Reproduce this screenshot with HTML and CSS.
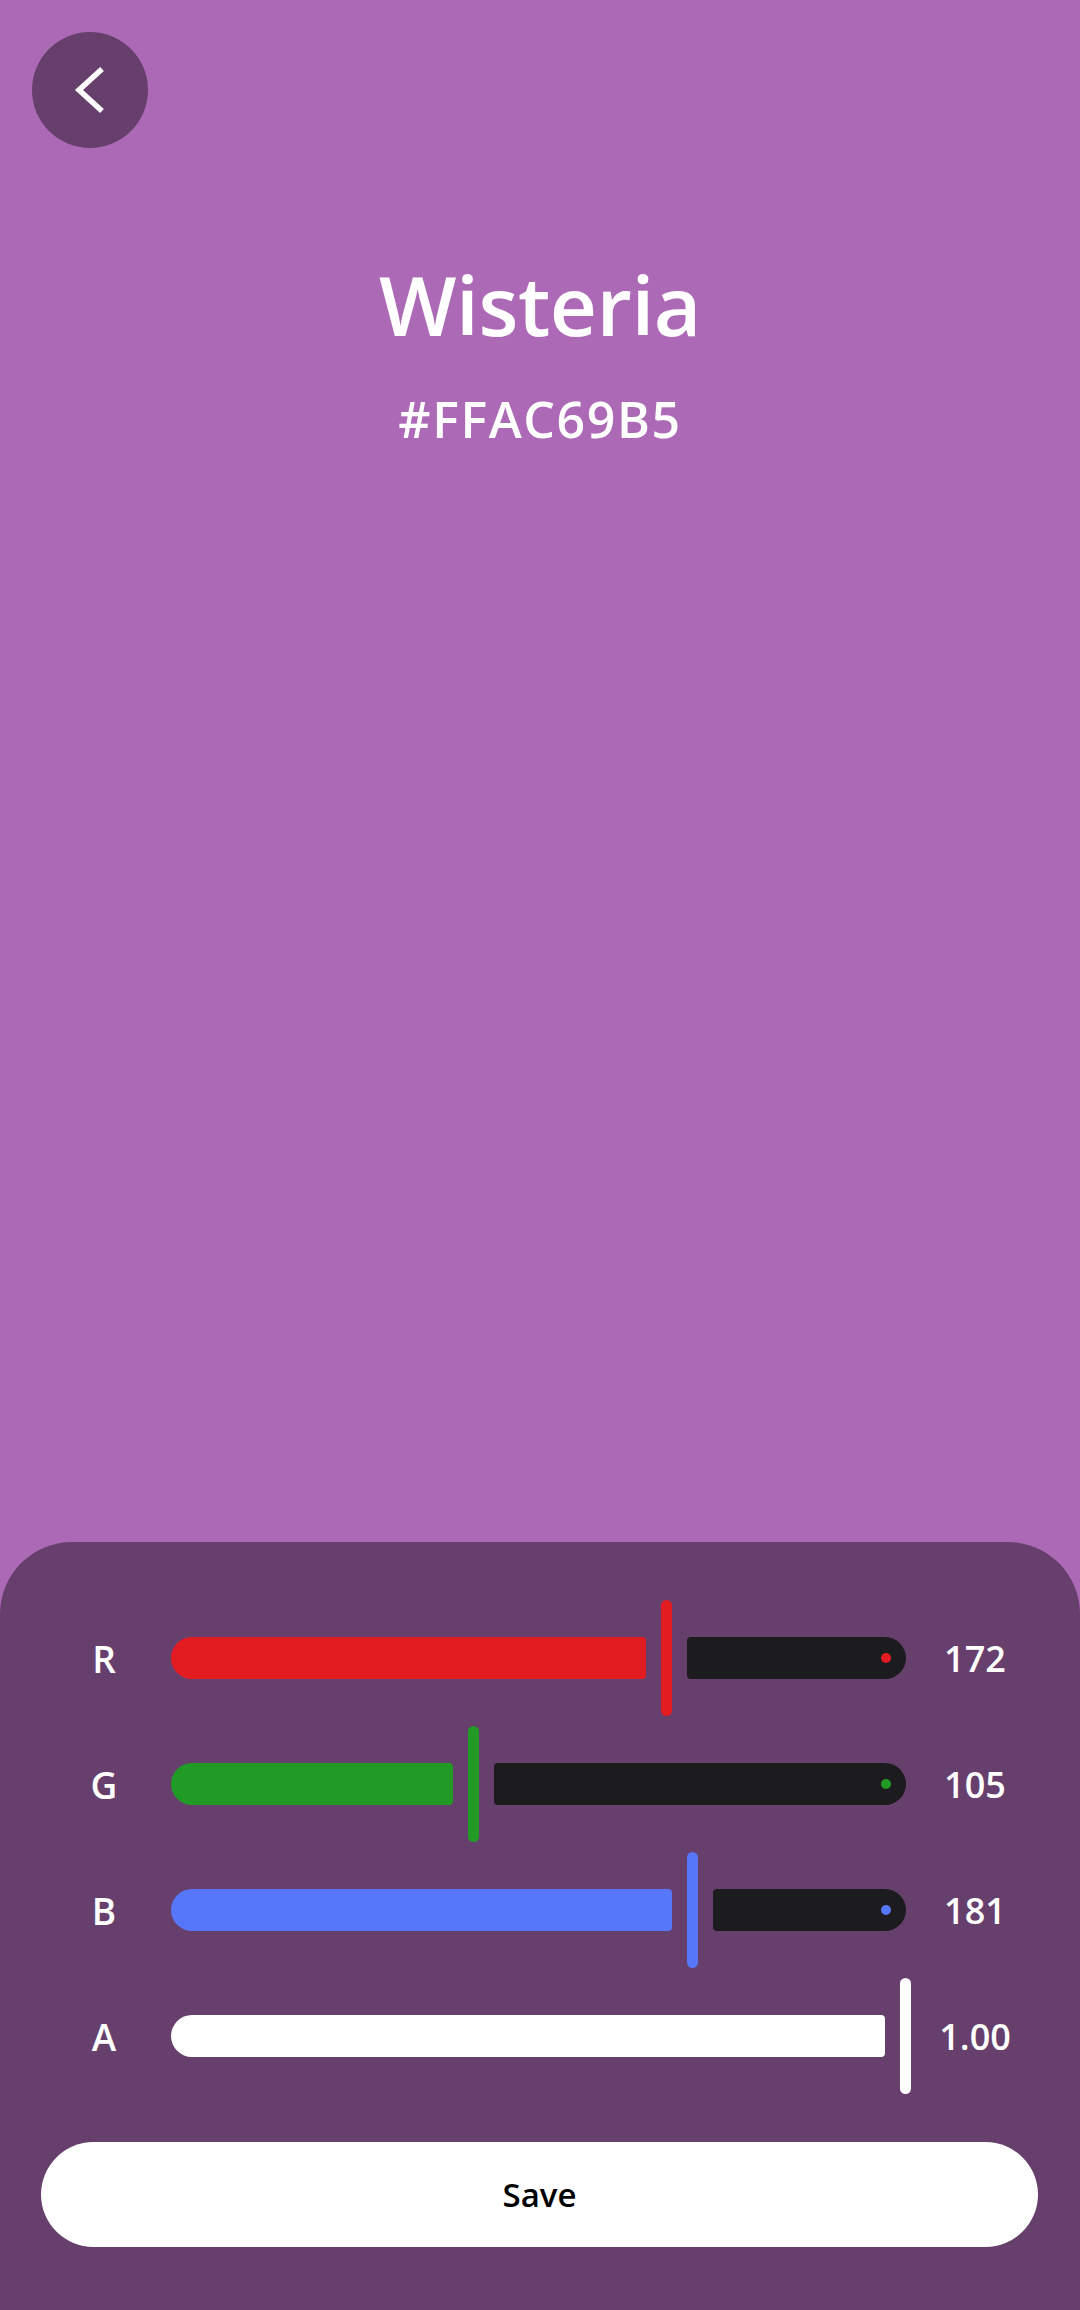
FILE: index.html
```html
<!DOCTYPE html>
<html lang="en">
<head>
    <meta charset="UTF-8">
    <meta name="viewport" content="width=device-width, initial-scale=1.0">
    <title>Wisteria</title>
    <link rel="stylesheet" href="styles.css">
</head>
<body>
    <div class="screen">
        <header class="top">
            <button class="back" aria-label="Back">
                <svg width="116" height="116" viewBox="0 0 116 116">
                    <polyline points="70,37 47,58 70,79" fill="none" stroke="#fff" stroke-width="5.5"/>
                </svg>
            </button>
            <h1 class="name">Wisteria</h1>
            <div class="hex">#FFAC69B5</div>
        </header>

        <section class="sheet">
            <div class="row">
                <span class="label">R</span>
                <div class="track red">
                    <div class="fill" style="width: 475px"></div>
                    <div class="thumb"></div>
                    <div class="rest"><span class="dot"></span></div>
                </div>
                <span class="value">172</span>
            </div>
            <div class="row">
                <span class="label">G</span>
                <div class="track green">
                    <div class="fill" style="width: 282px"></div>
                    <div class="thumb"></div>
                    <div class="rest"><span class="dot"></span></div>
                </div>
                <span class="value">105</span>
            </div>
            <div class="row">
                <span class="label">B</span>
                <div class="track blue">
                    <div class="fill" style="width: 501px"></div>
                    <div class="thumb"></div>
                    <div class="rest"><span class="dot"></span></div>
                </div>
                <span class="value">181</span>
            </div>
            <div class="row">
                <span class="label">A</span>
                <div class="track white">
                    <div class="fill" style="width: 714px"></div>
                    <div class="thumb"></div>
                </div>
                <span class="value">1.00</span>
            </div>

            <button class="save">Save</button>
        </section>
    </div>
</body>
</html>
```

FILE: styles.css
```css
/* Color detail screen */
* {
    box-sizing: border-box;
}

body {
    margin: 0;
    font-family: "Open Sans", "Noto Sans", sans-serif;
    background-color: #ac69b5;
    color: #fff;
}

.screen {
    display: flex;
    flex-direction: column;
    min-height: 100vh;
}

.top {
    display: flex;
    flex-direction: column;
    align-items: center;
    padding-top: 32px;
}

.back {
    align-self: flex-start;
    margin-left: 32px;
    width: 116px;
    height: 116px;
    padding: 0;
    border: none;
    border-radius: 50%;
    background-color: #673f6d;
    cursor: pointer;
}

.back svg {
    display: block;
}

.name {
    margin: 106px 0 0;
    font-size: 82px;
    line-height: 100px;
    font-weight: 600;
    letter-spacing: -0.5px;
}

.hex {
    margin-top: 35px;
    font-size: 50px;
    line-height: 60px;
    font-weight: 600;
    letter-spacing: 1.6px;
}

.sheet {
    margin-top: auto;
    background-color: #673f6d;
    border-radius: 72px 72px 0 0;
    padding: 58px 42px 63px 41px;
    display: flex;
    flex-direction: column;
    gap: 10px;
}

.row {
    display: flex;
    align-items: center;
    height: 116px;
}

.label {
    width: 124px;
    margin-right: 6px;
    padding-left: 2px;
    text-align: center;
    font-size: 37px;
    font-weight: 600;
}

.track {
    width: 735px;
    flex-shrink: 0;
    display: flex;
    align-items: center;
    gap: 15px;
    height: 116px;
}

.fill {
    height: 42px;
    border-radius: 21px 4px 4px 21px;
    flex-shrink: 0;
}

.thumb {
    width: 11px;
    height: 116px;
    border-radius: 6px;
    flex-shrink: 0;
}

.rest {
    flex: 1;
    height: 42px;
    border-radius: 4px 21px 21px 4px;
    background-color: #1c1b1d;
    display: flex;
    align-items: center;
    justify-content: flex-end;
    padding-right: 15px;
}

.dot {
    width: 10px;
    height: 10px;
    border-radius: 50%;
}

.red .fill, .red .thumb, .red .dot { background-color: #e31c22; }
.green .fill, .green .thumb, .green .dot { background-color: #229a26; }
.blue .fill, .blue .thumb, .blue .dot { background-color: #5677f9; }
.white .fill, .white .thumb { background-color: #fff; }

.value {
    flex: 1;
    padding-left: 6px;
    text-align: center;
    font-size: 36px;
    font-weight: 600;
}

.save {
    margin-top: 38px;
    height: 105px;
    border: none;
    border-radius: 53px;
    background-color: #fff;
    color: #000;
    font-family: "Open Sans", "Noto Sans", sans-serif;
    font-size: 33px;
    font-weight: 600;
    cursor: pointer;
}
```
